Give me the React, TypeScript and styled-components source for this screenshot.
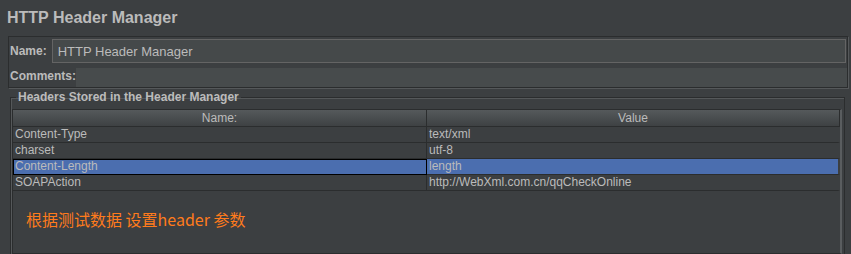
import * as React from "react";
import styled, { createGlobalStyle } from "styled-components";

const GlobalStyle = createGlobalStyle`
  html, body {
    margin: 0;
    padding: 0;
    background: #3c3f41;
  }
  body {
    font-family: "Liberation Sans", Arial, sans-serif;
    color: #bbbbbb;
  }
`;

const Page = styled.div`
  width: 851px;
  height: 254px;
  overflow: hidden;
  background: #3c3f41;
  display: flex;
  flex-direction: column;
`;

const Title = styled.div`
  height: 36px;
  box-sizing: border-box;
  padding: 8px 0 0 7px;
  font-size: 16px;
  line-height: 20px;
  font-weight: bold;
  color: #bbbbbb;
`;

const NamePanel = styled.div`
  margin: 0 3px 0 8px;
  border: 1px solid #2b2d2e;
  box-shadow: 1px 1px 0 #55585a;
  display: flex;
  flex-direction: column;
`;

const FieldRow = styled.div<{ $height: number }>`
  display: flex;
  align-items: stretch;
  height: ${(p) => p.$height}px;
`;

const Label = styled.div<{ $gap: number }>`
  font-size: 12px;
  font-weight: bold;
  display: flex;
  align-items: center;
  padding: 0 ${(p) => p.$gap}px 0 1px;
  color: #bbbbbb;
`;

const TextInput = styled.div`
  flex: 1;
  margin: 2px 1px 1px 0;
  background: #45494a;
  border: 1px solid #646464;
  font-size: 13px;
  display: flex;
  align-items: center;
  padding-left: 5px;
  color: #bbbbbb;
`;

const TextArea = styled.div`
  flex: 1;
  margin-top: 4px;
  background: #474b4c;
`;

const Group = styled.fieldset`
  margin: 2px 6px 0 10px;
  padding: 5px 1px 0 1px;
  border: 1px solid #2b2d2e;
  box-shadow: inset 1px 1px 0 #55585a;
  border-bottom: none;
  flex: 1;
  min-width: 0;
  display: flex;
  flex-direction: column;
`;

const Legend = styled.legend`
  margin-left: 4px;
  padding: 0 2px;
  font-size: 12px;
  line-height: 14px;
  font-weight: bold;
  color: #bbbbbb;
`;

const ScrollPane = styled.div`
  flex: 1;
  border: 1px solid #2b2d2e;
  border-right: 2px solid #5a5d5f;
  margin-right: 1px;
  display: flex;
  flex-direction: column;
`;

const Grid = styled.div`
  display: grid;
  grid-template-columns: 414px 1fr;
`;

const HeaderCell = styled.div`
  height: 17px;
  box-sizing: border-box;
  background: linear-gradient(#55595b, #3e4143);
  border-right: 1px solid #2b2d2e;
  border-bottom: 1px solid #2b2d2e;
  font-size: 12px;
  line-height: 16px;
  text-align: center;
  color: #bbbbbb;
  &:last-child {
    border-right: none;
  }
`;

const Cell = styled.div<{ $selected?: boolean; $focus?: boolean; $last?: boolean }>`
  height: 16px;
  box-sizing: border-box;
  border-right: ${(p) => (p.$last ? "2px solid #3c3f41" : "1px solid #2b2d2e")};
  border-bottom: 1px solid #2b2d2e;
  background: ${(p) => (p.$selected ? "#4b6eaf" : "transparent")};
  outline: ${(p) => (p.$focus ? "1px solid #000" : "none")};
  outline-offset: -1px;
  font-size: 12px;
  line-height: 15px;
  padding-left: 2px;
  color: #bbbbbb;
  white-space: nowrap;
  overflow: hidden;
`;

const Note = styled.div`
  margin: 18px 0 0 13px;
  font-family: "Noto Sans CJK SC", "Liberation Sans", sans-serif;
  font-size: 16px;
  line-height: 20px;
  color: #ff7b1c;
`;

const rows = [
  { name: "Content-Type", value: "text/xml" },
  { name: "charset", value: "utf-8" },
  { name: "Content-Length", value: "length", selected: true },
  { name: "SOAPAction", value: "http://WebXml.com.cn/qqCheckOnline" },
];

export default function App() {
  return (
    <Page>
      <GlobalStyle />
      <Title>HTTP Header Manager</Title>
      <NamePanel>
        <FieldRow $height={27}>
          <Label $gap={5}>Name:</Label>
          <TextInput>HTTP Header Manager</TextInput>
        </FieldRow>
        <FieldRow $height={23}>
          <Label $gap={0}>Comments:</Label>
          <TextArea />
        </FieldRow>
      </NamePanel>
      <Group>
        <Legend>Headers Stored in the Header Manager</Legend>
        <ScrollPane>
          <Grid>
            <HeaderCell>Name:</HeaderCell>
            <HeaderCell>Value</HeaderCell>
            {rows.map((r) => (
              <React.Fragment key={r.name}>
                <Cell $selected={r.selected} $focus={r.selected}>
                  {r.name}
                </Cell>
                <Cell $selected={r.selected} $last>
                  {r.value}
                </Cell>
              </React.Fragment>
            ))}
          </Grid>
          <Note>根据测试数据 设置header 参数</Note>
        </ScrollPane>
      </Group>
    </Page>
  );
}
